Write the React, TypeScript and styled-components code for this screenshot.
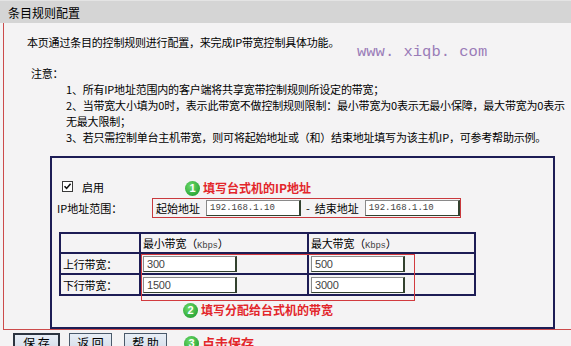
import { FC } from 'react';
import styled, { createGlobalStyle } from 'styled-components';

const GlobalStyle = createGlobalStyle`
  html, body {
    margin: 0;
    padding: 0;
    background: #f4f3f4;
  }
  body {
    font-family: 'Noto Sans CJK SC', 'Noto Sans', sans-serif;
    font-size: 11px;
    color: #000;
  }
`;

const Page = styled.div`
  position: relative;
  width: 571px;
  height: 346px;
  overflow: hidden;
`;

const TitleBar = styled.div`
  height: 23px;
  line-height: 23px;
  padding-left: 8px;
  background: #d5d5d5;
  border-top: 1px solid #e4e4e4;
  box-sizing: border-box;
  font-size: 12px;
`;

const Panel = styled.div`
  margin-left: 3px;
  padding: 11px 0 0 22px;
  border-left: 1px solid #cc4b4b;
  border-bottom: 1px solid #cc4b4b;
`;

const TextLine = styled.div<{ $indent?: number }>`
  line-height: 16px;
  white-space: nowrap;
  letter-spacing: -0.2px;
  padding-left: ${({ $indent }) => $indent ?? 0}px;
`;

const NoteTitle = styled(TextLine)`
  margin-top: 15px;
`;

const Watermark = styled.div`
  position: absolute;
  left: 357px;
  top: 43px;
  font-family: 'Liberation Mono', monospace;
  font-size: 15.5px;
  color: #9a7cb8;
  white-space: pre;
`;

const RuleBox = styled.div`
  margin: 11px 0 0 24px;
  width: 505px;
  height: 173px;
  border: 2px solid #1d1d55;
  box-sizing: border-box;
  padding-top: 20px;
`;

const EnableRow = styled.div`
  display: flex;
  align-items: flex-end;
  height: 18px;
  padding-left: 10px;
`;

const CheckBox = styled.span`
  display: inline-flex;
  width: 11px;
  height: 11px;
  margin-bottom: 4px;
  background: #fff;
  border: 1px solid #3a3a3a;
  box-sizing: border-box;
`;

const EnableLabel = styled.span`
  margin-left: 9px;
  line-height: 16px;
  margin-bottom: 1px;
`;

const Annotation = styled.div<{ $offset: number; $size?: number }>`
  display: flex;
  align-items: center;
  gap: 3px;
  margin-left: ${({ $offset }) => $offset}px;
  color: #e3262b;
  font-weight: bold;
  font-size: ${({ $size }) => $size ?? 12}px;
  line-height: 16px;
  white-space: nowrap;
`;

const Badge = styled.span`
  display: inline-flex;
  align-items: center;
  justify-content: center;
  width: 15px;
  height: 15px;
  border-radius: 50%;
  background: radial-gradient(circle at 40% 35%, #6fdc6a, #2ea83a 70%);
  color: #fff;
  font-family: 'Liberation Sans', Arial, sans-serif;
  font-size: 11px;
  font-weight: bold;
`;

const IPRow = styled.div`
  display: flex;
  align-items: center;
  margin-top: 2px;
  height: 20px;
  padding-left: 5px;
`;

const IPLabel = styled.span`
  width: 95px;
`;

const RangeBox = styled.div`
  display: flex;
  align-items: center;
  width: 309px;
  height: 20px;
  padding-left: 3px;
  border: 1px solid #c9393d;
  box-sizing: border-box;
`;

const Dash = styled.span`
  margin: 0 5px 0 5px;
`;

const Field = styled.div<{ $width: number; $mono?: boolean; $gap?: number }>`
  display: flex;
  align-items: center;
  width: ${({ $width }) => $width}px;
  height: 16px;
  margin-left: ${({ $gap }) => $gap ?? 6}px;
  padding-left: 3px;
  box-sizing: border-box;
  background: #fff;
  border-top: 1px solid #8a8a8a;
  border-left: 1px solid #8a8a8a;
  border-right: 2px solid #33422f;
  border-bottom: 1px solid #33422f;
  color: #444;
  font-family: ${({ $mono }) =>
    $mono ? "'Liberation Mono', monospace" : "'Liberation Sans', Arial, sans-serif"};
  font-size: ${({ $mono }) => ($mono ? 9 : 11)}px;
`;

const TableWrap = styled.div`
  position: relative;
  margin: 14px 0 0 7px;
  width: 415px;
`;

const BandTable = styled.table`
  border-collapse: collapse;
  width: 415px;
  table-layout: fixed;
  td {
    border: 2px solid #1d1d55;
    padding: 0 0 0 2px;
    height: 19px;
    white-space: nowrap;
    letter-spacing: -0.2px;
  }
  tr:first-child td {
    height: 18px;
  }
`;

const Unit = styled.span`
  font-family: 'Liberation Mono', monospace;
  font-size: 9px;
  color: #444;
`;

const Highlight = styled.div`
  position: absolute;
  left: 82px;
  top: 22px;
  width: 274px;
  height: 47px;
  border: 1px solid #d23a3e;
  box-sizing: border-box;
  pointer-events: none;
`;

const ButtonRow = styled.div`
  display: flex;
  align-items: center;
  padding: 3px 0 0 13px;
`;

const Button = styled.button<{ $primary?: boolean; $width: number }>`
  width: ${({ $width }) => $width}px;
  height: 20px;
  margin-right: ${({ $primary }) => ($primary ? 9 : 12)}px;
  padding: 0;
  background: linear-gradient(#e8eef6, #d3dce8);
  border: ${({ $primary }) => ($primary ? '2px solid #2c3440' : '1px solid #4b5a6b')};
  font-family: 'Noto Sans CJK SC', sans-serif;
  font-size: 12px;
  color: #000;
  line-height: 16px;
  white-space: pre;
`;

const FieldCell: FC<{ value: string }> = ({ value }) => (
  <td>
    <Field $width={94} $gap={0}>
      {value}
    </Field>
  </td>
);

const App: FC = () => (
  <Page>
    <GlobalStyle />
    <TitleBar>条目规则配置</TitleBar>
    <Panel>
      <TextLine $indent={1}>本页通过条目的控制规则进行配置，来完成IP带宽控制具体功能。</TextLine>
      <NoteTitle $indent={5}>注意：</NoteTitle>
      <TextLine $indent={40}>1、所有IP地址范围内的客户端将共享宽带控制规则所设定的带宽；</TextLine>
      <TextLine $indent={40}>
        2、当带宽大小填为0时，表示此带宽不做控制规则限制：最小带宽为0表示无最小保障，最大带宽为0表示
      </TextLine>
      <TextLine $indent={40}>无最大限制；</TextLine>
      <TextLine $indent={40}>
        3、若只需控制单台主机带宽，则可将起始地址或（和）结束地址填写为该主机IP，可参考帮助示例。
      </TextLine>

      <RuleBox>
        <EnableRow>
          <CheckBox>
            <svg width="9" height="9" viewBox="0 0 9 9">
              <path d="M1.5 4.2 L3.6 6.4 L7.6 1.8" fill="none" stroke="#111" strokeWidth="1.6" />
            </svg>
          </CheckBox>
          <EnableLabel>启用</EnableLabel>
          <Annotation $offset={81}>
            <Badge>1</Badge>填写台式机的IP地址
          </Annotation>
        </EnableRow>

        <IPRow>
          <IPLabel>IP地址范围：</IPLabel>
          <RangeBox>
            <span>起始地址</span>
            <Field $width={95} $mono>192.168.1.10</Field>
            <Dash>-</Dash>
            <span>结束地址</span>
            <Field $width={95} $mono>192.168.1.10</Field>
          </RangeBox>
        </IPRow>

        <TableWrap>
          <BandTable>
            <colgroup>
              <col style={{ width: 80 }} />
              <col style={{ width: 168 }} />
              <col style={{ width: 167 }} />
            </colgroup>
            <tbody>
              <tr>
                <td />
                <td>
                  最小带宽（<Unit>Kbps</Unit>）
                </td>
                <td>
                  最大带宽（<Unit>Kbps</Unit>）
                </td>
              </tr>
              <tr>
                <td>上行带宽：</td>
                <FieldCell value="300" />
                <FieldCell value="500" />
              </tr>
              <tr>
                <td>下行带宽：</td>
                <FieldCell value="1500" />
                <FieldCell value="3000" />
              </tr>
            </tbody>
          </BandTable>
          <Highlight />
        </TableWrap>

        <Annotation $offset={131} style={{ marginTop: 6 }}>
          <Badge>2</Badge>填写分配给台式机的带宽
        </Annotation>
      </RuleBox>
    </Panel>

    <ButtonRow>
      <Button $primary $width={47}>保 存</Button>
      <Button $width={43}>返 回</Button>
      <Button $width={43}>帮 助</Button>
      <Annotation $offset={5} $size={13}>
        <Badge>3</Badge>点击保存
      </Annotation>
    </ButtonRow>

    <Watermark>www. xiqb. com</Watermark>
  </Page>
);

export default App;
